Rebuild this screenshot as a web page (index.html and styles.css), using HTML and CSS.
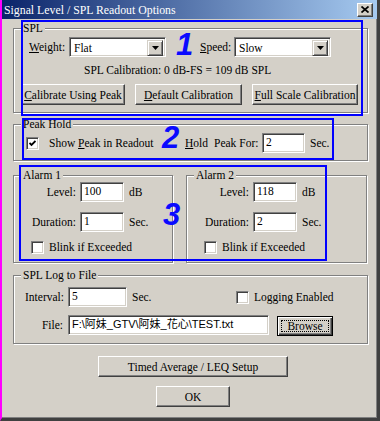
FILE: index.html
```html
<!DOCTYPE html>
<html lang="en">
<head>
    <meta charset="UTF-8">
    <title>Signal Level / SPL Readout Options</title>
    <link rel="stylesheet" href="styles.css">
</head>
<body>
<div class="window">
    <div class="titlebar">
        <span class="title">Signal Level / SPL Readout Options</span>
        <span class="close">
            <svg width="8" height="7" viewBox="0 0 8 7"><path d="M0.5 0.5 L7.5 6.5 M7.5 0.5 L0.5 6.5" stroke="#000" stroke-width="1.7"/></svg>
        </span>
    </div>

    <div class="content">
        <!-- SPL -->
        <fieldset class="group spl">
            <legend>SPL</legend>
            <div class="spl-row">
                <span class="lbl-weight"><u>W</u>eight:</span>
                <div class="select"><span>Flat</span><i class="drop"><svg width="7" height="4" viewBox="0 0 7 4"><path d="M0 0 H7 L3.5 4 Z" fill="#000"/></svg></i></div>
                <span class="lbl-speed"><u>S</u>peed:</span>
                <div class="select"><span>Slow</span><i class="drop"><svg width="7" height="4" viewBox="0 0 7 4"><path d="M0 0 H7 L3.5 4 Z" fill="#000"/></svg></i></div>
            </div>
            <p class="calib">SPL Calibration: 0 dB-FS = 109 dB SPL</p>
            <div class="btn-row">
                <button class="btn w104"><u>C</u>alibrate Using Peak</button>
                <button class="btn w107"><u>D</u>efault Calibration</button>
                <button class="btn w106"><u>F</u>ull Scale Calibration</button>
            </div>
        </fieldset>

        <!-- Peak hold -->
        <fieldset class="group peak">
            <legend>Peak Hold</legend>
            <div class="peak-row">
                <span class="check"><svg width="7" height="7" viewBox="0 0 7 7"><path d="M0.5 3 L2.5 5 L6.5 1" fill="none" stroke="#000" stroke-width="1.8"/></svg></span>
                <span class="show">Show <u>P</u>eak in Readout</span>
                <span class="hold"><u>H</u>old</span>
                <span class="peakfor">Peak For:</span>
                <span class="field w43">2</span>
                <span class="unit">Sec.</span>
            </div>
        </fieldset>

        <!-- Alarms -->
        <div class="alarms">
            <fieldset class="group alarm alarm1">
                <legend>Alarm 1</legend>
                <div class="alarm-grid">
                    <span class="lbl">Level:</span><span class="field">100</span><span class="unit">dB</span>
                    <span class="lbl">Duration:</span><span class="field">1</span><span class="unit">Sec.</span>
                </div>
                <div class="blink"><span class="check"></span><span class="blink-text">Blink if Exceeded</span></div>
            </fieldset>
            <fieldset class="group alarm alarm2">
                <legend>Alarm 2</legend>
                <div class="alarm-grid">
                    <span class="lbl">Level:</span><span class="field">118</span><span class="unit">dB</span>
                    <span class="lbl">Duration:</span><span class="field">2</span><span class="unit">Sec.</span>
                </div>
                <div class="blink"><span class="check"></span><span class="blink-text">Blink if Exceeded</span></div>
            </fieldset>
        </div>

        <!-- Log -->
        <fieldset class="group log">
            <legend>SPL Log to File</legend>
            <div class="log-row">
                <span class="interval-lbl">Interval:</span>
                <span class="field w59">5</span>
                <span class="sec-wide">Sec.</span>
                <span class="check"></span>
                <span class="blink-text">Logging Enabled</span>
            </div>
            <div class="log-row file-row">
                <span class="file-lbl">File:</span>
                <span class="field path w201">F:\阿妹_GTV\阿妹_花心\TEST.txt</span>
                <button class="btn browse"><span class="focus">Browse</span></button>
            </div>
        </fieldset>

        <div class="actions">
            <button class="btn timed">Timed Average / LEQ Setup</button>
            <button class="btn ok">OK</button>
        </div>
    </div>

    <!-- annotations drawn over the dialog -->
    <div class="mark box1"></div>
    <div class="mark box2"></div>
    <div class="mark box3"></div>
    <span class="num n1">1</span>
    <span class="num n2">2</span>
    <span class="num n3">3</span>
</div>
</body>
</html>
```
FILE: styles.css
```css
body {
    margin: 0;
    font: 11.5px/14px "Liberation Serif", "Noto Sans CJK TC", serif;
    color: #000;
}
.window {
    position: relative;
    width: 380px;
    height: 421px;
    box-sizing: border-box;
    background-color: #d4d0c8;
    border-left: 2px solid #ff00ff;
    border-right: 3px solid #404040;
    border-bottom: 3px solid #404040;
    box-shadow: inset -1px -1px 0 #808080;
}
.titlebar {
    height: 19px;
    display: flex;
    align-items: center;
    justify-content: space-between;
    padding: 0 4px 0 2px;
    background: linear-gradient(to right, #0a246a, #a6caf0);
}
.title {
    color: #fff;
    font-size: 11.8px;
}
.close {
    width: 16px;
    height: 14px;
    box-sizing: border-box;
    display: flex;
    align-items: center;
    justify-content: center;
    background: #d4d0c8;
    border: 1px solid;
    border-color: #fff #404040 #404040 #fff;
    box-shadow: inset -1px -1px 0 #808080;
}
.content {
    padding: 3px 9px 0 11px;
}

/* group boxes */
.group {
    margin: 0;
    padding: 0;
    min-width: 0;
    box-sizing: border-box;
    border: 1px solid #808080;
    box-shadow: 1px 1px 0 #fff, inset 1px 1px 0 #fff;
}
.group legend {
    margin-left: 7px;
    padding: 0 2px;
    line-height: 13px;
    background: #d4d0c8;
}

/* 3d bits */
.btn {
    height: 21px;
    box-sizing: border-box;
    padding: 0;
    font: inherit;
    color: #000;
    white-space: nowrap;
    background: #d4d0c8;
    border: 1px solid;
    border-color: #fff #404040 #404040 #fff;
    box-shadow: inset -1px -1px 0 #808080;
}
.field, .select, .check {
    box-sizing: border-box;
    background: #fff;
    border: 1px solid;
    border-color: #808080 #fff #fff #808080;
    box-shadow: inset 1px 1px 0 #404040, inset -1px -1px 0 #d4d0c8;
}
.field {
    display: block;
    width: 44px;
    height: 20px;
    padding: 1px 3px 0;
    line-height: 14px;
    white-space: nowrap;
    overflow: hidden;
}
.check {
    width: 13px;
    height: 13px;
    flex: none;
    display: flex;
    align-items: center;
    justify-content: center;
}
.w43 { width: 43px; }
.w59 { width: 59px; }
.w201 { width: 201px; }
.w104 { width: 104px; }
.w106 { width: 106px; }
.w107 { width: 107px; }

/* SPL */
.spl {
    padding-bottom: 7px;
}
.spl-row {
    display: flex;
    align-items: center;
    height: 20px;
    margin-top: 2px;
    padding-left: 15px;
}
.lbl-weight { width: 40px; }
.lbl-speed { width: 34px; margin-left: 34px; }
.select {
    width: 97px;
    height: 20px;
    display: flex;
    padding: 2px;
}
.select span {
    flex: 1;
    padding-left: 2px;
    line-height: 16px;
}
.drop {
    width: 16px;
    height: 16px;
    box-sizing: border-box;
    display: flex;
    align-items: center;
    justify-content: center;
    background: #d4d0c8;
    border: 1px solid;
    border-color: #d4d0c8 #404040 #404040 #d4d0c8;
    box-shadow: inset 1px 1px 0 #fff, inset -1px -1px 0 #808080;
}
.calib {
    margin: 6px 0 0;
    padding-left: 70px;
}
.btn-row {
    display: flex;
    gap: 10px;
    margin-top: 7px;
    padding-left: 7px;
}

/* Peak hold */
.peak {
    margin-top: 5px;
    padding-bottom: 7px;
}
.peak-row {
    display: flex;
    align-items: center;
    height: 20px;
    margin-top: 2px;
    padding-left: 12px;
}
.show { width: 136px; margin-left: 10px; }
.hold { width: 29px; }
.peakfor { width: 48px; }
.unit { margin-left: 5px; }

/* Alarms */
.alarms {
    display: flex;
    gap: 13px;
    margin-top: 8px;
}
.alarm {
    padding-bottom: 8px;
}
.alarm1 { width: 160px; }
.alarm2 { width: 181px; }
.alarm-grid {
    display: grid;
    grid-template-columns: 62px 44px auto;
    column-gap: 4px;
    row-gap: 10px;
    align-items: center;
}
.alarm-grid .lbl { text-align: right; }
.alarm-grid .unit { margin-left: 1px; }
.blink {
    display: flex;
    align-items: center;
    height: 14px;
    margin-top: 8px;
    padding-left: 17px;
}
.blink-text { margin-left: 5px; }

/* Log */
.log {
    margin-top: 6px;
    padding-bottom: 7px;
}
.log-row {
    display: flex;
    align-items: center;
    height: 20px;
    margin-top: 5px;
    padding-left: 11px;
}
.interval-lbl { width: 43px; }
.sec-wide { width: 104px; padding-left: 5px; }
.file-row {
    align-items: flex-start;
    height: 21px;
    margin-top: 8px;
    padding-left: 0;
}
.file-lbl {
    width: 49px;
    padding: 3px 5px 0 0;
    text-align: right;
}
.path {
    font-family: "Liberation Sans", "Noto Sans CJK TC", sans-serif;
    font-size: 11px;
}
.btn.browse {
    width: 56px;
    height: 20px;
    margin: 1px 0 0 8px;
    padding: 3px;
    border-color: #000;
    box-shadow: inset 1px 1px 0 #fff, inset -1px -1px 0 #404040, inset -2px -2px 0 #808080;
}
.focus {
    display: flex;
    height: 100%;
    box-sizing: border-box;
    align-items: center;
    justify-content: center;
    border: 1px dotted #000;
}

/* bottom buttons */
.actions {
    display: flex;
    flex-direction: column;
    align-items: center;
    gap: 9px;
    margin-top: 12px;
    padding-left: 5px;
}
.timed { width: 190px; }
.ok { width: 74px; }

/* blue annotations */
.mark {
    position: absolute;
    box-sizing: border-box;
    border: 2px solid #0000ff;
}
.box1 { left: 19px; top: 20px; width: 342px; height: 96px; }
.box2 { left: 20px; top: 118px; width: 312px; height: 42px; }
.box3 { left: 17px; top: 165px; width: 308px; height: 96px; }
.num {
    position: absolute;
    font: italic bold 31px/31px "Liberation Sans", sans-serif;
    color: #0a0aff;
}
.n1 { left: 174px; top: 29px; }
.n2 { left: 160px; top: 122px; }
.n3 { left: 161px; top: 199px; }
```
